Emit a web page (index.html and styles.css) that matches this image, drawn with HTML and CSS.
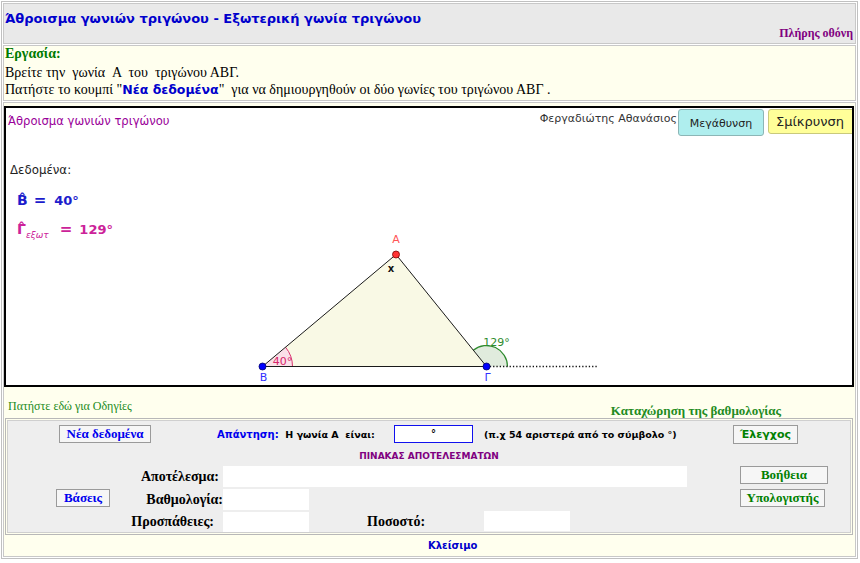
FILE: index.html
```html
<!DOCTYPE html>
<html lang="el">
<head>
<meta charset="utf-8">
<title>Άθροισμα γωνιών τριγώνου</title>
<link rel="stylesheet" href="styles.css">
</head>
<body>
<div class="page">
  <header class="head">
    <div class="title">Άθροισμα γωνιών τριγώνου - Εξωτερική γωνία τριγώνου</div>
    <div class="full">Πλήρης οθόνη</div>
  </header>
  <section class="task">
    <div class="task-label">Εργασία:</div>
    <p class="task-text">Βρείτε την &nbsp;γωνία &nbsp;Α &nbsp;του &nbsp;τριγώνου ΑΒΓ.<br>Πατήστε το κουμπί "<b class="kw">Νέα δεδομένα</b>" &nbsp;για να δημιουργηθούν οι δύο γωνίες του τριγώνου ΑΒΓ .</p>
  </section>
  <section class="main">
    <div class="applet">
      <div class="topbar">
        <span class="app-title">Άθροισμα γωνιών τριγώνου</span>
        <span class="author">Φεργαδιώτης Αθανάσιος</span>
        <span class="gbtn zoom-in">Μεγάθυνση</span>
        <span class="gbtn zoom-out">Σμίκρυνση</span>
      </div>
      <div class="given">Δεδομένα:</div>
      <div class="eq eq-b"><span class="sym">B</span><span class="op">=</span><span class="val">40°</span></div>
      <div class="eq eq-g"><span class="sym">Γ</span><span class="sub">εξωτ</span><span class="op op-g">=</span><span class="val">129°</span></div>
      <svg class="canvas" viewBox="6 108 846 277" width="846" height="277">
        <polygon points="262.5,366.5 486.5,366.5 396,254.5" fill="#f9f9e5"/>
        <path d="M262.5 366.5 L292.5 366.5 A30 30 0 0 0 285.5 347.2 Z" fill="#fae0e8"/>
        <path d="M292.5 366.5 A30 30 0 0 0 285.5 347.2" fill="none" stroke="#d8336e" stroke-width="1"/>
        <path d="M486.5 366.5 L507.5 366.5 A21 21 0 0 0 473.3 350.2 Z" fill="#e0ebdd"/>
        <path d="M507.5 366.5 A21 21 0 0 0 473.3 350.2" fill="none" stroke="#2e8b2e" stroke-width="1.2"/>
        <line x1="486.5" y1="366.5" x2="598" y2="366.5" stroke="#111" stroke-width="1.3" stroke-dasharray="1.3 2"/>
        <polyline points="396,254.5 262.5,366.5 486.5,366.5 396,254.5" fill="none" stroke="#1a1a1a" stroke-width="1"/>
        <circle cx="396" cy="254.5" r="3.5" fill="#ff3333" stroke="#7a0000" stroke-width="0.8"/>
        <circle cx="262.5" cy="366.5" r="3.5" fill="#0000ff" stroke="#00006a" stroke-width="0.8"/>
        <circle cx="486.5" cy="366.5" r="3.5" fill="#0000ff" stroke="#00006a" stroke-width="0.8"/>
        <text x="396" y="243" class="lbl-a">A</text>
        <text x="263.5" y="381" class="lbl-b">B</text>
        <text x="487.5" y="381" class="lbl-b">Γ</text>
        <text x="391" y="272" class="lbl-x">x</text>
        <text x="282.5" y="364.5" class="lbl-40">40°</text>
        <text x="496.5" y="345.5" class="lbl-129">129°</text>
      </svg>
    </div>
    <div class="hints">
      <span class="howto">Πατήστε εδώ για Οδηγίες</span>
      <span class="grade">Καταχώρηση της βαθμολογίας</span>
    </div>
    <div class="panel">
      <div class="panel-in">
        <div class="row row-a">
          <span class="btn btn-blue btn-new">Νέα δεδομένα</span>
          <span class="ans"><span class="ans-l">Απάντηση:</span> <span class="ans-q">&nbsp;Η γωνία Α &nbsp;είναι:</span></span>
          <span class="deg-in">°</span>
          <span class="example">(π.χ 54 αριστερά από το σύμβολο °)</span>
          <span class="btn btn-check">Έλεγχος</span>
        </div>
        <div class="tbl-title">ΠΙΝΑΚΑΣ ΑΠΟΤΕΛΕΣΜΑΤΩΝ</div>
        <div class="row row-c">
          <span class="lbl lbl-res">Αποτέλεσμα:</span>
          <span class="field field-wide"></span>
          <span class="btn btn-green btn-help">Βοήθεια</span>
        </div>
        <div class="row row-d">
          <span class="btn btn-blue btn-base">Βάσεις</span>
          <span class="lbl lbl-score">Βαθμολογία:</span>
          <span class="field"></span>
          <span class="btn btn-green btn-calc">Υπολογιστής</span>
        </div>
        <div class="row row-e">
          <span class="lbl lbl-tries">Προσπάθειες:</span>
          <span class="field field-e"></span>
          <span class="pct">Ποσοστό:</span>
          <span class="field field-e2"></span>
        </div>
      </div>
    </div>
    <div class="close">Κλείσιμο</div>
  </section>
</div>
</body>
</html>
```

FILE: styles.css
```css
* { box-sizing: border-box; }
body { margin: 0; background: #fff; font-family: "Liberation Serif", "Times New Roman", serif; }

.page {
  margin: 1px 0 0 1px;
  width: 857px;
  border: 1px solid #c0c0c0;
  padding: 1px;
  display: flex;
  flex-direction: column;
  gap: 1px;
}

.head {
  border: 1px solid #c8c8c8;
  background: #e9e9e9;
  height: 41px;
  padding: 7px 2px 0 1px;
}
.title { font: bold 13px/16px "DejaVu Sans", Verdana, sans-serif; color: #0000cc; }
.full { font: bold 12px/13px "Liberation Serif", serif; color: #800080; text-align: right; }

.task {
  border: 1px solid #c8c8c8;
  background: #ffffee;
  height: 56px;
  padding: 0 1px;
}
.task-label { font: bold 14px/16px "Liberation Serif", serif; color: #007a00; }
.task-text { margin: 2px 0 0; font: 14px/17px "Liberation Serif", serif; color: #000; }
.kw { font: bold 12.5px "DejaVu Sans", Verdana, sans-serif; color: #0000cc; }

.main {
  border: 1px solid #c8c8c8;
  background: #ffffee;
  padding-top: 3px;
}

.applet {
  position: relative;
  width: 850px;
  height: 281px;
  border: 2px solid #000;
  background: #fff;
  overflow: hidden;
  font-family: "DejaVu Sans", sans-serif;
}
.topbar { display: flex; align-items: flex-start; padding: 1px 0 0 2px; height: 28px; }
.topbar > span { flex: none; }
.app-title { margin-top: 5px; font-size: 11.6px; line-height: 14px; color: #990099; }
.author { margin-left: auto; margin-right: 1px; margin-top: 3px; font-size: 11px; line-height: 14px; color: #333; }
.gbtn { display: flex; align-items: center; justify-content: center; border-radius: 3px; color: #222; }
.zoom-in { width: 86px; height: 27px; background: #afeeee; border: 1px solid #8cb6b6; font-size: 11px; padding-top: 1px; }
.zoom-out { width: 90px; height: 25px; margin-left: 4px; margin-right: -6px; background: #ffff99; border: 1px solid #c9c97c; font-size: 13px; padding-right: 6px; }

.given { margin: 27px 0 0 4px; font-size: 11.8px; line-height: 14px; color: #222; }
.eq { font: bold 13px/20px "DejaVu Sans", sans-serif; padding-left: 11px; white-space: nowrap; }
.eq-b { margin-top: 13px; color: #1c1ccc; }
.eq-g { margin-top: 8px; color: #cc2299; }
.sym { position: relative; display: inline-block; font-size: 14px; }
.sym::after {
  content: "ˆ";
  position: absolute;
  left: 0; right: 0; top: -1px;
  text-align: center;
  font-size: 14px;
}
.op { margin-left: 6px; font-size: 15px; }
.val { margin-left: 8px; }
.sub { font: italic 9px "DejaVu Sans", sans-serif; position: relative; top: 4px; margin-left: 0; }
.op-g { margin-left: 11px; }
.eq-g .val { margin-left: 7px; }

.canvas { position: absolute; left: 0; top: 0; }
.canvas text { font-family: "DejaVu Sans", sans-serif; text-anchor: middle; }
.lbl-a { font-size: 11px; fill: #ff5555; }
.lbl-b { font-size: 11px; fill: #3030ff; }
.lbl-x { font-size: 10px; font-weight: bold; fill: #111; }
.lbl-40 { font-size: 11px; fill: #d6266a; }
.lbl-129 { font-size: 11px; fill: #2e8b2e; }

.hints { display: flex; align-items: flex-end; height: 31px; }
.howto { font: 12px/12px "Liberation Serif", serif; color: #228b22; margin: 0 0 6px 4px; }
.grade { font: bold 13px/14px "Liberation Serif", serif; color: #228b22; margin-left: auto; margin-right: 74px; }

.panel { margin: 0 2px 0 1px; border: 1px solid #b8b8b8; padding: 1px; height: 117px; }
.panel-in { border: 1px solid #cfcfcf; background: #eeeeee; height: 113px; padding-top: 3px; }

.row { display: flex; }
.row > * { flex: none; }
.btn {
  display: flex; align-items: center; justify-content: center;
  background: #f6f6f6; border: 1px solid #9a9a9a;
}
.btn-blue { color: #0000ee; font: bold 13px "Liberation Serif", serif; }
.btn-green { color: #008000; font: bold 13px "Liberation Serif", serif; }

.row-a { align-items: center; height: 20px; }
.btn-new { margin-left: 51px; width: 92px; height: 18px; }
.ans { margin-left: 66px; width: 177px; font: bold 9.5px "DejaVu Sans", sans-serif; color: #000; white-space: nowrap; }
.ans-l { color: #0000ee; font-size: 10px; }
.deg-in { width: 79px; height: 18px; border: 1px solid #1010ee; background: #fff; text-align: center; font: bold 10px/15px "DejaVu Sans", sans-serif; }
.example { margin-left: 11px; width: 249px; font: bold 9.5px "DejaVu Sans", sans-serif; color: #000; white-space: nowrap; }
.btn-check { width: 65px; height: 19px; color: #008000; font: bold 11px "DejaVu Sans", sans-serif; }

.tbl-title { margin-top: 6px; height: 12px; text-align: center; font: bold 9px/12px "DejaVu Sans", sans-serif; color: #800080; }

.row-c { margin-top: 4px; height: 22px; align-items: flex-start; }
.row-d { margin-top: 1px; height: 22px; align-items: flex-start; }
.row-e { height: 21px; align-items: flex-start; }

.lbl { width: 95px; text-align: right; font: bold 14px/21px "Liberation Serif", serif; color: #000; }
.lbl-res { margin-left: 120px; padding-right: 4px; }
.lbl-score { margin-left: 18px; padding-right: 0; }
.lbl-tries { margin-left: 120px; padding-right: 9px; }
.field { width: 86px; height: 21px; background: #fff; }
.field-wide { width: 464px; }
.btn-help { margin-left: 53px; width: 88px; height: 18px; }
.btn-base { margin-left: 48px; width: 54px; height: 18px; }
.btn-calc { margin-left: 431px; width: 85px; height: 18px; }
.field-e { margin-top: 1px; height: 20px; }
.pct { width: 175px; padding-left: 58px; font: bold 14px/21px "Liberation Serif", serif; color: #000; }
.field-e2 { height: 20px; }

.close { height: 21px; padding-left: 424px; font: bold 10px/21px "DejaVu Sans", sans-serif; color: #0000cc; }
```
